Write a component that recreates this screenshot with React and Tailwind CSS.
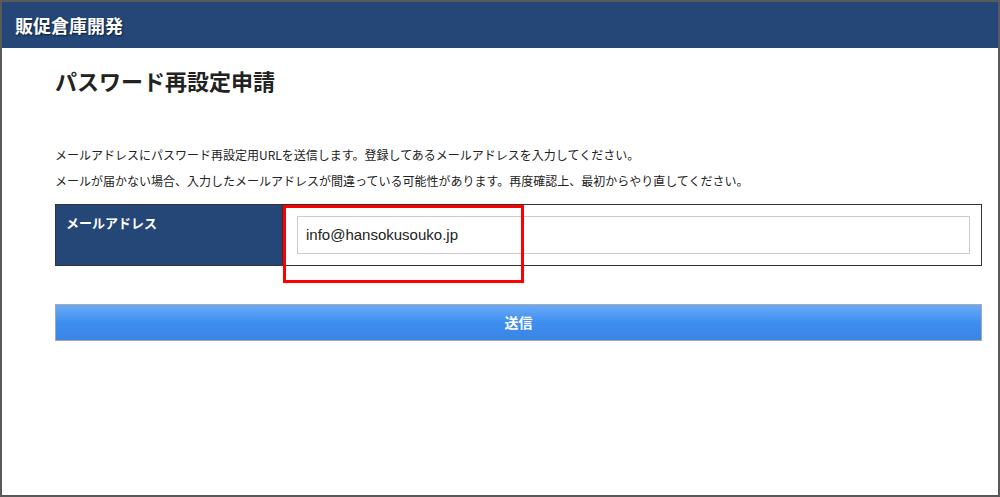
export default function App() {
  const f = { fontFamily: '"Noto Sans CJK JP","Liberation Sans",sans-serif' };
  return (
    <div className="w-[1000px] h-[497px] border-2 border-[#5a5a5a] bg-white relative overflow-hidden" style={f}>
      <div className="h-[46px] bg-[#244777] flex items-center px-[13px]">
        <span className="text-white text-[18px] font-bold" style={{ textShadow: '1px 1px 2px rgba(0,0,0,0.6)' }}>販促倉庫開発</span>
      </div>
      <div className="px-[53px]">
        <h1 className="text-[22px] font-bold text-[#222] mt-[14px] leading-[36px]">パスワード再設定申請</h1>
        <p className="text-[12px] text-[#222] mt-[49px] leading-[16px]">メールアドレスにパスワード再設定用URLを送信します。登録してあるメールアドレスを入力してください。</p>
        <p className="text-[12px] text-[#222] mt-[10px] leading-[16px]">メールが届かない場合、入力したメールアドレスが間違っている可能性があります。再度確認上、最初からやり直してください。</p>
        <div className="mt-[15px] flex border border-[#333] h-[62px] w-[927px]">
          <div className="w-[226px] bg-[#244777] text-white text-[13px] font-bold px-[10px] pt-[8px]">メールアドレス</div>
          <div className="flex-1 bg-white pl-[14px] pr-[11px] pt-[11px] border-l border-[#333]">
            <div className="h-[38px] border border-[#ccc] flex items-center px-[8px] text-[15px] text-[#222]" style={{ fontFamily: '"Liberation Sans",sans-serif' }}>info@hansokusouko.jp</div>
          </div>
        </div>
        <div className="mt-[38px] w-[927px] h-[37px] border border-[#aaa] bg-gradient-to-b from-[#6aaaf5] via-[#3d8ef0] to-[#3a84e4] flex items-center justify-center text-white text-[14px] font-bold">送信</div>
      </div>
      <div className="absolute left-[281px] top-[203px] w-[241px] h-[78px] border-[3px] border-[#f00]"></div>
    </div>
  );
}
